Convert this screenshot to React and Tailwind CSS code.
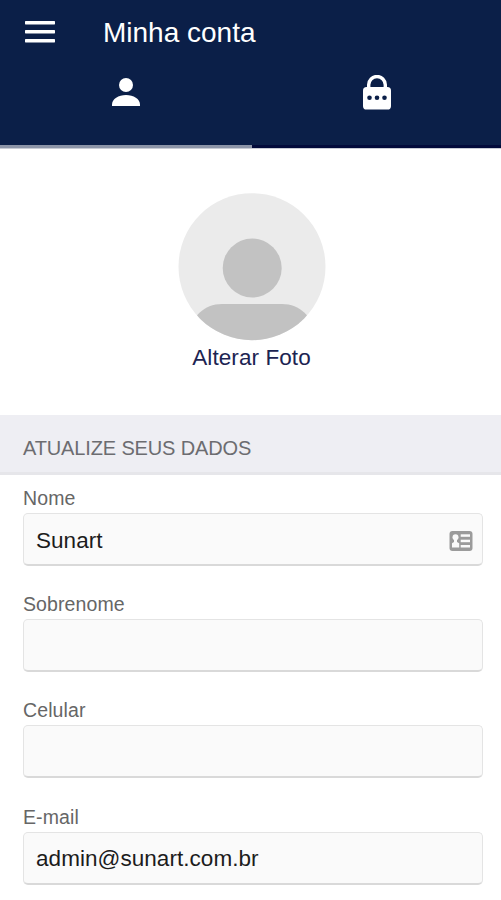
import React, { useState } from "react";

const FIELDS = [
  { name: "nome", label: "Nome", type: "text", card: true },
  { name: "sobrenome", label: "Sobrenome", type: "text" },
  { name: "celular", label: "Celular", type: "tel" },
  { name: "email", label: "E-mail", type: "email" },
];

function MenuIcon() {
  return (
    <svg width="30" height="22" viewBox="0 0 30 22" fill="#fff">
      <rect y="0" width="30" height="3.4" rx="0.6" />
      <rect y="9" width="30" height="3.4" rx="0.6" />
      <rect y="18" width="30" height="3.4" rx="0.6" />
    </svg>
  );
}

function PersonIcon() {
  return (
    <svg width="28" height="28" viewBox="0 0 28 28" fill="#fff">
      <circle cx="14" cy="7" r="7" />
      <path d="M0 28v-1.500c0-5.500 6.500-9.500 14-9.500s14 4 14 9.500v1.500z" />
    </svg>
  );
}

function LockIcon() {
  return (
    <svg width="28" height="35" viewBox="0 0 28 35">
      <path d="M5.700 14V9.800a8.300 8.300 0 0 1 16.600 0V14" fill="none" stroke="#fff" strokeWidth="3.400" />
      <rect y="12" width="28" height="22.500" rx="3.600" fill="#fff" />
      <circle cx="6.500" cy="22.800" r="2.300" fill="#0b1f48" />
      <circle cx="14" cy="22.800" r="2.300" fill="#0b1f48" />
      <circle cx="21.500" cy="22.800" r="2.300" fill="#0b1f48" />
    </svg>
  );
}

function Avatar() {
  return (
    <svg width="148" height="148" viewBox="0 0 148 148">
      <defs>
        <clipPath id="avatar">
          <circle cx="74" cy="73.700" r="73.5" />
        </clipPath>
      </defs>
      <g clipPath="url(#avatar)">
        <rect width="148" height="148" fill="#ebebeb" />
        <circle cx="74.2" cy="75" r="29.5" fill="#c2c2c2" />
        <path d="M13 148v-8c0-16 13-29 31-29h60c18 0 31 13 31 29v8z" fill="#c2c2c2" />
      </g>
    </svg>
  );
}

function CardIcon() {
  return (
    <svg width="24" height="20" viewBox="0 0 24 20">
      <rect x="0.5" width="23" height="20" rx="3" fill="#9b9b9b" />
      <g fill="#fafafa">
        <circle cx="6.5" cy="6.200" r="3" />
        <path d="M5 8h3v3l2.200 1.300v4.200H3v-4.200l2-1.300z" />
        <rect x="11.700" y="3.300" width="9.300" height="2.500" />
        <rect x="11.700" y="8.700" width="9.300" height="2.500" />
        <rect x="11.700" y="14" width="9.300" height="2.500" />
      </g>
    </svg>
  );
}

export default function App() {
  const [tab, setTab] = useState("perfil");
  const [values, setValues] = useState({
    nome: "Sunart",
    sobrenome: "",
    celular: "",
    email: "admin@sunart.com.br",
  });

  const handleChange = (e) => {
    setValues({ ...values, [e.target.name]: e.target.value });
  };

  return (
    <div className="h-[900px] w-full overflow-hidden bg-white font-['Liberation_Sans',Arial,sans-serif]">
      <header className="flex h-[148px] flex-col bg-[#0b1f48]">
        <div className="flex h-[65px] items-center pl-[25px]">
          <button aria-label="Menu" className="pb-px">
            <MenuIcon />
          </button>
          <h1 className="ml-12 pt-px text-[28px] leading-8 text-white">Minha conta</h1>
        </div>
        <nav className="grid flex-1 grid-cols-[252px_1fr]">
          <button
            aria-label="Perfil"
            onClick={() => setTab("perfil")}
            className={`flex items-start justify-center border-b-3 pt-[13px] ${tab === "perfil" ? "border-[#8d95a8]" : "border-[#020a3a]"}`}
          >
            <PersonIcon />
          </button>
          <button
            aria-label="Senha"
            onClick={() => setTab("senha")}
            className={`flex items-start justify-center border-b-3 pt-[10px] ${tab === "senha" ? "border-[#8d95a8]" : "border-[#020a3a]"}`}
          >
            <LockIcon />
          </button>
        </nav>
      </header>

      <section className="flex h-[267px] flex-col items-center border-t border-[#c9ccd4] pt-11 pl-0.5">
        <Avatar />
        <button className="mt-1 text-[22.5px] leading-[26px] tracking-[0.08px] text-[#1c2452]">Alterar Foto</button>
      </section>

      <h2 className="flex h-[60px] items-center border-b-3 border-[#e6e6ea] bg-[#eeeef3] pt-2 pl-[23px] text-[20px] tracking-[-0.14px] text-[#6c6c70]">
        ATUALIZE SEUS DADOS
      </h2>

      <form className="flex flex-col gap-[27px] pt-3 pr-[18px] pl-[23px]">
        {FIELDS.map((field) => (
          <label key={field.name} className="flex flex-col last:-mt-px last:pt-[1.500px]">
            <span className="h-[26px] text-[19.5px] leading-[23px] tracking-[0.1px] text-[#666]">{field.label}</span>
            <span className="flex h-[53px] items-center rounded-[5px] border border-b-2 border-[#e4e4e4] border-b-[#d9d9d9] bg-[#fafafa] pt-[3px] pr-[9px] pl-3">
              <input
                name={field.name}
                type={field.type}
                value={values[field.name]}
                onChange={handleChange}
                className="min-w-0 flex-1 bg-transparent text-[22.5px] tracking-[0.05px] text-[#1c1c1c] outline-none"
              />
              {field.card && <CardIcon />}
            </span>
          </label>
        ))}
      </form>
    </div>
  );
}
